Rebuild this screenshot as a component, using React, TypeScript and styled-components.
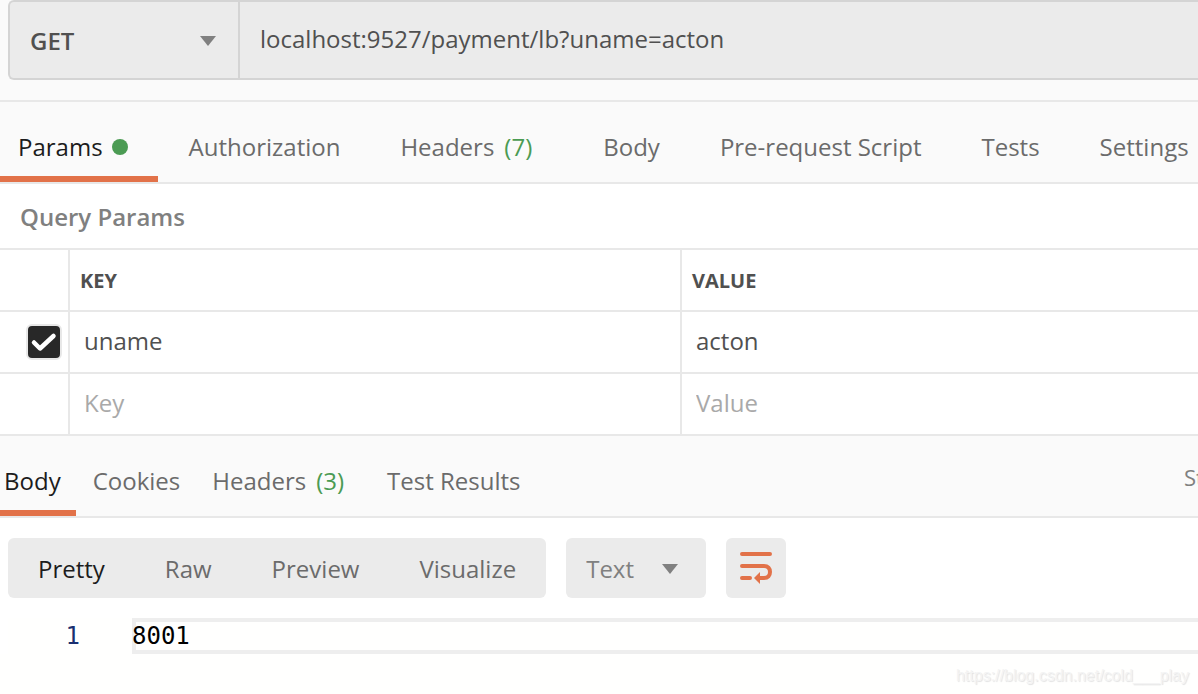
import React from "react";
import styled, { createGlobalStyle } from "styled-components";

const c = {
  orange: "#e27249",
  green: "#4b9b53",
  line: "#e8e8e8",
  field: "#ebebeb",
  panel: "#fafafa",
  ink: "#1c1c1c",
  text: "#505050",
  muted: "#6b6b6b",
  soft: "#808080",
};

const Global = createGlobalStyle`
  *, *::before, *::after { box-sizing: border-box; }
  body { margin: 0; background: #fff; overflow-x: hidden; }
  body, button, input, select { font-family: "Open Sans", "Noto Sans", sans-serif; font-size: 24px; }
`;

const Page = styled.main`
  min-height: 100vh;
  overflow: hidden;
  color: ${c.text};
`;

const RequestBar = styled.div`
  display: flex;
  padding: 0 0 20px 8px;
  background: ${c.panel};
  border-bottom: 2px solid ${c.line};
`;

const RequestBox = styled.div`
  display: flex;
  flex: 1;
  height: 80px;
  background: ${c.field};
  border: 2px solid #d4d4d4;
  border-right: 0;
  border-radius: 6px 0 0 6px;
`;

const SelectWrap = styled.div<{ $inset: number }>`
  position: relative;
  display: flex;
  svg {
    position: absolute;
    right: ${(p) => p.$inset}px;
    top: 50%;
    margin-top: -4px;
    pointer-events: none;
  }
`;

const MethodSelect = styled.select`
  appearance: none;
  width: 230px;
  padding: 0 20px;
  border: 0;
  border-right: 2px solid #d4d4d4;
  background: transparent;
  color: ${c.text};
  font-weight: 600;
`;

const UrlInput = styled.input`
  flex: 1;
  min-width: 0;
  padding: 0 20px 4px;
  border: 0;
  outline: 0;
  background: transparent;
  color: ${c.text};
`;

const TabBar = styled.nav`
  display: flex;
  height: 82px;
  background: ${c.panel};
  border-bottom: 2px solid ${c.line};
  overflow: hidden;
`;

const Tab = styled.button<{ $active?: boolean; $pad: number; $start?: number }>`
  display: flex;
  flex: none;
  align-items: center;
  margin-right: ${(p) => (p.$active ? 1 : 0)}px;
  padding: 14px ${(p) => (p.$active ? p.$pad - 1 : p.$pad)}px 0 ${(p) => p.$start ?? p.$pad}px;
  border: 0;
  border-bottom: 6px solid ${(p) => (p.$active ? c.orange : "transparent")};
  background: transparent;
  color: ${(p) => (p.$active ? c.ink : c.muted)};
  white-space: nowrap;
`;

const Dot = styled.span`
  width: 16px;
  height: 16px;
  margin: 2px 1px 0 9px;
  border-radius: 50%;
  background: ${c.green};
`;

const Count = styled.span`
  margin: 0 11px 0 10px;
  color: ${c.green};
`;

const Status = styled.span`
  flex: 0 0 14px;
  margin-left: auto;
  padding-top: 4px;
  overflow: hidden;
  color: ${c.soft};
  font-size: 22px;
  line-height: 74px;
  white-space: nowrap;
`;

const SectionTitle = styled.h2`
  margin: 0;
  padding: 2px 20px 0;
  color: ${c.soft};
  font-size: 24px;
  font-weight: 600;
  line-height: 62px;
`;

const ParamsTable = styled.table`
  width: 100%;
  table-layout: fixed;
  border-spacing: 0;
  border-top: 2px solid ${c.line};
`;

const cell = `
  height: 62px;
  padding: 0;
  border-bottom: 2px solid ${c.line};
`;

const Head = styled.th<{ $width?: number }>`
  ${cell}
  width: ${(p) => (p.$width ? `${p.$width}px` : "auto")};
  padding: 0 10px;
  border-right: ${(p) => (p.$width ? `2px solid ${c.line}` : "0")};
  font-size: 20px;
  font-weight: 700;
  text-align: left;
`;

const Cell = styled.td`
  ${cell}
  border-right: 2px solid ${c.line};
  &:last-child { border-right: 0; }
`;

const CellInput = styled.input`
  display: block;
  width: 100%;
  height: 60px;
  padding: 0 14px 4px;
  border: 0;
  outline: 0;
  background: transparent;
  color: ${c.text};
  &::placeholder { color: #a9a9a9; opacity: 1; }
`;

const CheckLabel = styled.label`
  display: grid;
  justify-content: end;
  padding-right: 6px;
  > * { grid-area: 1 / 1; }
  svg { pointer-events: none; }
`;

const CheckInput = styled.input`
  appearance: none;
  width: 36px;
  height: 36px;
  margin: 0;
  border: 2px solid ${c.line};
  border-radius: 6px;
  background: #fff;
  &:checked { background: #282828; }
`;

const Toolbar = styled.div`
  display: flex;
  gap: 20px;
  padding: 20px 8px;
`;

const Segments = styled.div`
  display: flex;
  height: 60px;
  border-radius: 6px;
  background: ${c.field};
`;

const Segment = styled.button<{ $active?: boolean }>`
  padding: 0 30px;
  border: 0;
  background: transparent;
  color: ${(p) => (p.$active ? c.ink : c.muted)};
`;

const FormatSelect = styled.select`
  appearance: none;
  width: 140px;
  height: 60px;
  padding: 0 20px;
  border: 0;
  border-radius: 6px;
  background: ${c.field};
  color: ${c.soft};
`;

const WrapButton = styled.button`
  display: grid;
  place-items: center;
  width: 60px;
  height: 60px;
  padding: 0;
  border: 0;
  border-radius: 6px;
  background: ${c.field};
`;

const Editor = styled.div`
  display: flex;
  margin-left: 8px;
  background: #fffffe;
  color: #000;
  font-family: "DejaVu Sans Mono", "Liberation Mono", monospace;
  font-size: 24px;
  line-height: 36px;
`;

const LineNumber = styled.span`
  width: 124px;
  padding-right: 52px;
  color: #1a2f70;
  text-align: right;
`;

const CodeLine = styled.code`
  flex: 1;
  height: 36px;
  border: 4px solid #eee;
  border-right: 0;
  font-family: inherit;
  line-height: 28px;
  text-indent: -4px;
`;

const Credit = styled.footer`
  padding: 12px 9px 8px;
  background: #fffffe;
  color: #f4f4f4;
  font-family: "Liberation Sans", Arial, sans-serif;
  font-size: 16px;
  line-height: 20px;
  text-align: right;
  text-shadow: 1px 1px 1px #e2e2e2;
`;

const Caret = () => (
  <svg width="16" height="10" viewBox="0 0 16 10" aria-hidden="true">
    <path d="M0 0H16L8 10Z" fill="#808080" />
  </svg>
);

const requestTabs = ["Authorization", "Headers", "Body", "Pre-request Script", "Tests", "Settings"];

export default function App() {
  return (
    <>
      <Global />
      <Page>
        <RequestBar>
          <RequestBox>
            <SelectWrap $inset={24}>
              <MethodSelect aria-label="Method" defaultValue="GET">
                <option>GET</option>
                <option>POST</option>
              </MethodSelect>
              <Caret />
            </SelectWrap>
            <UrlInput aria-label="Request URL" defaultValue="localhost:9527/payment/lb?uname=acton" />
          </RequestBox>
        </RequestBar>

        <TabBar aria-label="Request">
          <Tab $active $pad={30} $start={18}>
            Params
            <Dot />
          </Tab>
          {requestTabs.map((name) => (
            <Tab key={name} $pad={30}>
              {name}
              {name === "Headers" && <Count>(7)</Count>}
            </Tab>
          ))}
        </TabBar>

        <SectionTitle>Query Params</SectionTitle>
        <ParamsTable>
          <thead>
            <tr>
              <Head $width={70} aria-label="Enabled" />
              <Head $width={612}>KEY</Head>
              <Head>VALUE</Head>
            </tr>
          </thead>
          <tbody>
            <tr>
              <Cell>
                <CheckLabel>
                  <CheckInput type="checkbox" defaultChecked aria-label="Enable uname" />
                  <svg width="36" height="36" viewBox="0 0 36 36" aria-hidden="true">
                    <path d="M8 18.500L14 24.500L27.500 12" fill="none" stroke="#fff" strokeWidth="4.500" strokeLinecap="round" strokeLinejoin="round" />
                  </svg>
                </CheckLabel>
              </Cell>
              <Cell><CellInput aria-label="Key 1" defaultValue="uname" /></Cell>
              <Cell><CellInput aria-label="Value 1" defaultValue="acton" /></Cell>
            </tr>
            <tr>
              <Cell />
              <Cell><CellInput aria-label="Key 2" placeholder="Key" /></Cell>
              <Cell><CellInput aria-label="Value 2" placeholder="Value" /></Cell>
            </tr>
          </tbody>
        </ParamsTable>

        <TabBar aria-label="Response">
          <Tab $active $pad={16} $start={4}>Body</Tab>
          <Tab $pad={16}>Cookies</Tab>
          <Tab $pad={16}>
            Headers
            <Count>(3)</Count>
          </Tab>
          <Tab $pad={16}>Test Results</Tab>
          <Status>Status</Status>
        </TabBar>

        <Toolbar>
          <Segments>
            <Segment $active>Pretty</Segment>
            <Segment>Raw</Segment>
            <Segment>Preview</Segment>
            <Segment>Visualize</Segment>
          </Segments>
          <SelectWrap $inset={28}>
            <FormatSelect aria-label="Format" defaultValue="Text">
              <option>Text</option>
              <option>JSON</option>
            </FormatSelect>
            <Caret />
          </SelectWrap>
          <WrapButton aria-label="Wrap lines">
            <svg width="32" height="32" viewBox="0 0 32 32" fill="none" stroke={c.orange} strokeWidth="4" strokeLinecap="round" aria-hidden="true">
              <path d="M2 2H30M2 14H24C28 14 30 16.500 30 20C30 23.500 28 26 24 26H20M2 26H10" />
              <path d="M14 26L20 20V32Z" fill={c.orange} stroke="none" />
            </svg>
          </WrapButton>
        </Toolbar>

        <Editor>
          <LineNumber>1</LineNumber>
          <CodeLine>8001</CodeLine>
        </Editor>
        <Credit>https://blog.csdn.net/cold___play</Credit>
      </Page>
    </>
  );
}
